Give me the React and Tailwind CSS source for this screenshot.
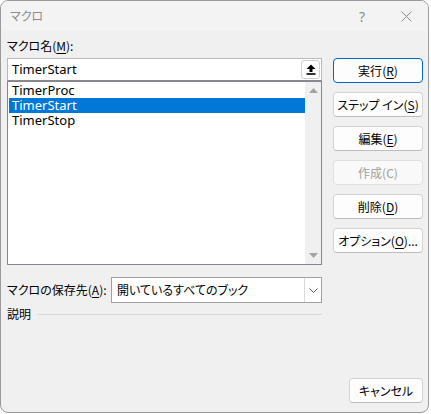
import clsx from 'clsx'

const JP = "font-['Noto_Sans_CJK_JP','Noto_Sans',sans-serif] [font-feature-settings:'palt']"
const LATIN = "font-['Noto_Sans','Noto_Sans_CJK_JP',sans-serif]"

const BUTTONS = [
  { label: '実行', key: 'R', primary: true },
  { label: 'ステップ イン', key: 'S' },
  { label: '編集', key: 'E' },
  { label: '作成', key: 'C', disabled: true },
  { label: '削除', key: 'D' },
  { label: 'オプション', key: 'O', tail: '...' },
]

const MACROS = ['TimerProc', 'TimerStart', 'TimerStop']

function Btn({ label, k, tail, primary, disabled }) {
  return (
    <div
      className={clsx(
        'h-[25px] flex items-center justify-center rounded-[4px] text-[12px]',
        primary && 'bg-[#fdfdfd] border border-[#0067c0] text-black',
        !primary && !disabled && 'bg-[#fdfdfd] border border-[#d3d3d3] border-b-[#bdbdbd] text-black',
        disabled && 'bg-[#f9f9f9] border border-[#e0e0e0] text-[#a0a0a0]'
      )}
    >
      {label}(
      {disabled ? k : <span className="underline underline-offset-2">{k}</span>}
      ){tail}
    </div>
  )
}

export default function App() {
  return (
    <div className={clsx('w-[431px] h-[414px] bg-white', JP)}>
      <div className="w-[429px] h-[413px] border border-[#9a9a9a] rounded-[8px] overflow-hidden bg-[#f0f0f0] flex flex-col">

        <div className="h-[30px] shrink-0 bg-[#f3f3f3] flex items-center pl-[9px] pr-[16px]">
          <span className="text-[12px] text-[#8c8c8c]">マクロ</span>
          <span className={clsx('ml-auto text-[14px] text-[#8c8c8c]', LATIN)}>?</span>
          <svg width="11" height="11" viewBox="0 0 11 11" className="ml-[36px]">
            <path d="M0.5 0.5L10.5 10.5M10.5 0.5L0.5 10.5" stroke="#8c8c8c" strokeWidth="1" />
          </svg>
        </div>

        <div className="flex-1 flex flex-col pl-[6px] pr-[5px] pt-[6px] pb-[9px]">
          <div className="flex gap-[11px]">

            <div className="w-[315px] flex flex-col">
              <div className="h-[18px] leading-[18px] text-[12px] text-black">
                マクロ名(<span className="underline underline-offset-2">M</span>):
              </div>

              <div className="mt-[3px] h-[23px] bg-white border border-[#b9b9b9] border-b-[#8a8a8a] flex items-center pl-[4px] pr-[1px]">
                <span className={clsx('text-[13px] text-black', LATIN)}>TimerStart</span>
                <div className="ml-auto w-[19px] h-[19px] bg-white border border-[#cfcfcf] rounded-[3px] flex items-center justify-center">
                  <svg width="10" height="11" viewBox="0 0 10 11">
                    <path d="M5 0.5L9.5 5H6.5V8H3.5V5H0.5Z" fill="#000" />
                    <rect x="0.5" y="9.2" width="9" height="1.6" fill="#000" />
                  </svg>
                </div>
              </div>

              <div className="h-[184px] bg-white border border-[#828790] flex">
                <div className="flex-1 pl-[1px] pt-[1px] flex flex-col">
                  {MACROS.map(m => (
                    <div
                      key={m}
                      className={clsx(
                        'h-[15px] flex items-center pl-[3px]',
                        m === 'TimerStart' ? 'bg-[#0078d7] text-white' : 'text-black'
                      )}
                    >
                      <span className={clsx('text-[13px] leading-[13px]', LATIN)}>{m}</span>
                    </div>
                  ))}
                </div>
                <div className="w-[16px] bg-[#f0f0f0] flex flex-col items-center justify-between py-[6px]">
                  <svg width="9" height="5" viewBox="0 0 9 5"><path d="M4.5 0L9 5H0Z" fill="#a3a3a3" /></svg>
                  <svg width="9" height="5" viewBox="0 0 9 5"><path d="M0 0H9L4.5 5Z" fill="#a3a3a3" /></svg>
                </div>
              </div>

              <div className="mt-[12px] h-[26px] flex items-center">
                <span className="w-[104px] text-[12px] text-black">
                  マクロの保存先(<span className="underline underline-offset-2">A</span>):
                </span>
                <div className="flex-1 h-[26px] bg-white border border-[#a0a0a0] flex items-center pl-[5px]">
                  <span className="text-[12px] text-black">開いているすべてのブック</span>
                  <div className="ml-auto w-[17px] h-full border-l border-[#d9d9d9] flex items-center justify-center">
                    <svg width="9" height="5" viewBox="0 0 9 5">
                      <path d="M0.5 0.5L4.5 4.5L8.5 0.5" fill="none" stroke="#606060" strokeWidth="1" />
                    </svg>
                  </div>
                </div>
              </div>

              <div className="mt-[3px] h-[16px] flex items-center gap-[6px]">
                <span className="text-[12px] text-black">説明</span>
                <div className="flex-1 h-px bg-[#d9d9d9]" />
              </div>
            </div>

            <div className="w-[90px] mt-[21px] flex flex-col gap-[9px]">
              {BUTTONS.map(b => (
                <Btn key={b.key} label={b.label} k={b.key} tail={b.tail} primary={b.primary} disabled={b.disabled} />
              ))}
            </div>
          </div>

          <div className="mt-auto flex justify-end">
            <div className="w-[74px] h-[25px] flex items-center justify-center rounded-[4px] bg-[#fdfdfd] border border-[#d3d3d3] border-b-[#bdbdbd] text-[12px] text-black">
              キャンセル
            </div>
          </div>
        </div>
      </div>
    </div>
  )
}
